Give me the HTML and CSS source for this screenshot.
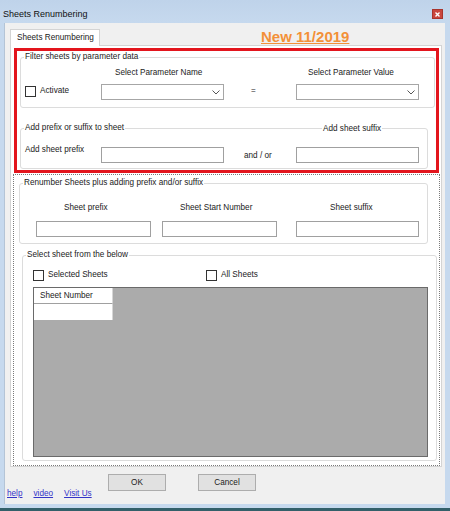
FILE: index.html
```html
<!DOCTYPE html>
<html>
<head>
<meta charset="utf-8">
<link rel="stylesheet" href="styles.css">
</head>
<body>
<div class="window">
  <div class="titlebar">
    <span class="title">Sheets Renumbering</span>
    <span class="close"><svg width="5" height="5" viewBox="0 0 5 5"><path d="M0.5 0.5 L4.5 4.5 M4.5 0.5 L0.5 4.5" stroke="#fff" stroke-width="1.4"/></svg></span>
  </div>
  <div class="client">
    <div class="tabstrip">
      <div class="tab">Sheets Renumbering</div>
      <div class="new">New 11/2019</div>
    </div>
    <div class="tabpage">
      <div class="redbox">
        <fieldset class="g g1">
          <legend>Filter sheets by parameter data</legend>
          <div class="g1-labels"><span>Select Parameter Name</span><span>Select Parameter Value</span></div>
          <div class="g1-row">
            <div class="check activate"><span class="cb"></span><span>Activate</span></div>
            <div class="combo"><svg width="8" height="5" viewBox="0 0 8 5"><path d="M0.5 0.5 L4 4 L7.5 0.5" fill="none" stroke="#555" stroke-width="1"/></svg></div>
            <span class="eq">=</span>
            <div class="combo"><svg width="8" height="5" viewBox="0 0 8 5"><path d="M0.5 0.5 L4 4 L7.5 0.5" fill="none" stroke="#555" stroke-width="1"/></svg></div>
          </div>
        </fieldset>
        <fieldset class="g g2">
          <legend>Add prefix or suffix to sheet</legend>
          <div class="g2-top"><span class="over">Add sheet suffix</span></div>
          <div class="g2-row">
            <span class="prefix-lbl">Add sheet prefix</span>
            <div class="input w123"></div>
            <span class="andor">and / or</span>
            <div class="input w123"></div>
          </div>
        </fieldset>
      </div>
      <div class="panel">
        <fieldset class="g g3">
          <legend>Renumber Sheets plus adding prefix and/or suffix</legend>
          <div class="g3-labels"><span>Sheet prefix</span><span>Sheet Start Number</span><span>Sheet suffix</span></div>
          <div class="g3-inputs">
            <div class="input i1"></div>
            <div class="input i2"></div>
            <div class="input i3"></div>
          </div>
        </fieldset>
        <fieldset class="g g4">
          <legend>Select sheet from the below</legend>
          <div class="g4-checks">
            <div class="check selected"><span class="cb"></span><span>Selected Sheets</span></div>
            <div class="check"><span class="cb"></span><span>All Sheets</span></div>
          </div>
          <div class="grid">
            <div class="grid-head">Sheet Number</div>
            <div class="grid-row"></div>
          </div>
        </fieldset>
      </div>
    </div>
    <div class="bottom">
      <div class="links"><a>help</a><a>video</a><a>Visit Us</a></div>
      <div class="buttons"><div class="btn">OK</div><div class="btn">Cancel</div></div>
    </div>
  </div>
</div>
</body>
</html>
```

FILE: styles.css
```css
html, body {
  margin: 0;
  padding: 0;
}
body {
  font-family: "Liberation Sans", Arial, sans-serif;
  font-size: 8.2px;
  color: #222;
  background: #2f5c66;
}
.window {
  width: 450px;
  height: 511px;
  overflow: hidden;
  background: linear-gradient(to bottom, #bfd3ea 0, #c6d9ee 23px, #c6d9ee 508px, #33606a 508px);
  display: flex;
  flex-direction: column;
}
.titlebar {
  height: 23px;
  box-sizing: border-box;
  padding: 5px 7px 0 3px;
  display: flex;
  justify-content: space-between;
  align-items: center;
}
.title {
  font-size: 9px;
  color: #111;
  line-height: 18px;
}
.close {
  width: 11px;
  height: 10px;
  background: #c9463e;
  border: 1px solid #a8342d;
  box-sizing: border-box;
  display: flex;
  align-items: center;
  justify-content: center;
}
.close svg { display: block; }
.client {
  margin-left: 4px;
  width: 441px;
  height: 481px;
  background: #f0f0f0;
  box-sizing: border-box;
  padding-top: 6px;
  border-left: 1px solid #b4c4d6;
}
.tabstrip {
  height: 16px;
  margin-left: 5px;
  display: flex;
  align-items: flex-start;
}
.tab {
  width: 90px;
  height: 17px;
  box-sizing: border-box;
  border: 1px solid #d4d4d4;
  border-bottom: none;
  background: #fff;
  padding-left: 6px;
  line-height: 16px;
  margin-bottom: -1px;
  position: relative;
  z-index: 1;
}
.new {
  margin-left: 161px;
  font-size: 15px;
  font-weight: bold;
  color: #f39038;
  text-decoration: underline;
  line-height: 16px;
}
.tabpage {
  margin-left: 5px;
  width: 432px;
  height: 422px;
  box-sizing: border-box;
  border: 1px solid #d4d4d4;
  background: #fff;
}
.redbox {
  margin: 2px 0 0 3px;
  width: 425px;
  height: 125px;
  box-sizing: border-box;
  border: 3px solid #e3151d;
}
fieldset.g {
  margin: 0;
  padding: 0;
  min-width: 0;
  box-sizing: border-box;
  border: 1px solid #dcdcdc;
  border-radius: 3px;
}
fieldset.g legend {
  padding: 0 1px;
  margin-left: 3px;
  line-height: 12px;
  font-size: 8.2px;
}
.g1 {
  margin-left: 3px !important;
  width: 415px;
  height: 57px;
}
.g1-labels {
  margin-top: 4px;
  height: 12px;
  line-height: 12px;
  display: grid;
  grid-template-columns: 193px auto;
  padding-left: 94px;
}
.g1-row {
  margin-top: 5px;
  height: 16px;
  display: flex;
  align-items: flex-start;
}
.check {
  display: flex;
  align-items: center;
  gap: 4px;
  line-height: 12px;
}
.activate {
  width: 80px;
  box-sizing: border-box;
  padding-left: 4px;
  margin-top: 1px;
}
.cb {
  width: 11px;
  height: 11px;
  box-sizing: border-box;
  border: 1px solid #333;
  background: #fff;
}
.combo {
  width: 123px;
  height: 16px;
  box-sizing: border-box;
  border: 1px solid #a6a6a6;
  background: #fff;
  display: flex;
  justify-content: flex-end;
  align-items: center;
  padding: 1px 3px 0 0;
}
.combo svg { display: block; }
.eq {
  width: 72px;
  box-sizing: border-box;
  padding-left: 27px;
  line-height: 12px;
  margin-top: 1px;
}
.g2 {
  margin: 14px 0 0 3px !important;
  width: 408px;
  height: 47px;
}
.g2-top {
  margin-top: -11px;
  height: 12px;
  line-height: 12px;
  padding-left: 301px;
}
.over {
  background: #fff;
  padding: 0 1px;
}
.g2-row {
  display: flex;
  align-items: flex-start;
}
.prefix-lbl {
  width: 80px;
  box-sizing: border-box;
  padding-left: 4px;
  line-height: 12px;
  margin-top: 9px;
}
.input {
  height: 16px;
  box-sizing: border-box;
  border: 1px solid #a0a0a0;
  background: #fff;
  margin-top: 12px;
}
.w123 { width: 123px; }
.andor {
  width: 72px;
  box-sizing: border-box;
  padding-left: 20px;
  line-height: 12px;
  margin-top: 15px;
}
.panel {
  margin: 1px 0 0 2px;
  width: 427px;
  height: 292px;
  box-sizing: border-box;
  border: 1px dotted #7a7a7a;
}
.g3 {
  margin: 2px 0 0 5px !important;
  width: 409px;
  height: 67px;
}
.g3-labels {
  margin-top: 13px;
  height: 12px;
  line-height: 12px;
  display: grid;
  grid-template-columns: 116px 150px auto;
  padding-left: 44px;
}
.g3-inputs {
  display: flex;
  margin-top: -5px;
}
.i1 { margin-left: 16px; width: 115px; }
.i2 { margin-left: 11px; width: 115px; }
.i3 { margin-left: 19px; width: 123px; }
.g4 {
  margin: 5px 0 0 8px !important;
  width: 415px;
  height: 212px;
}
.g4-checks {
  margin-top: 8px;
  height: 12px;
  display: flex;
  align-items: center;
}
.selected {
  width: 173px;
  margin-left: 10px;
}
.grid {
  margin: 6px 0 0 10px;
  width: 395px;
  height: 170px;
  box-sizing: border-box;
  background: #ababab;
  border: 1px solid #6a6a6a;
}
.grid-head {
  width: 79px;
  height: 16px;
  box-sizing: border-box;
  background: #fff;
  border-bottom: 1px solid #a0a0a0;
  border-right: 1px solid #d6d6d6;
  padding-left: 6px;
  line-height: 15px;
}
.grid-row {
  width: 79px;
  height: 16px;
  box-sizing: border-box;
  background: #fff;
  border-right: 1px solid #d6d6d6;
}
.bottom {
  height: 37px;
  display: flex;
  align-items: flex-start;
}
.links {
  align-self: flex-end;
  margin-bottom: 4px;
  width: 103px;
  box-sizing: border-box;
  padding-left: 2px;
  display: flex;
  gap: 11px;
  line-height: 12px;
}
.links a {
  color: #3434c8;
  text-decoration: underline;
}
.buttons {
  margin-top: 7px;
  display: flex;
  gap: 32px;
}
.btn {
  width: 58px;
  height: 17px;
  box-sizing: border-box;
  border: 1px solid #adadad;
  background: #e1e1e1;
  text-align: center;
  line-height: 15px;
}
```
